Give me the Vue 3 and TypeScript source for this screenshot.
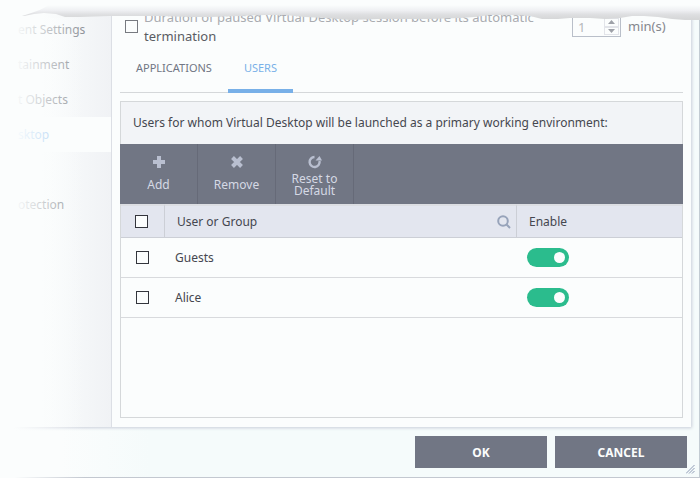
<script setup lang="ts">
import { computed, ref } from 'vue'

interface NavItem {
  label: string
  active?: boolean
}

interface UserRow {
  name: string
  selected: boolean
  enabled: boolean
}

const navItems: NavItem[] = [
  { label: 'ent Settings' },
  { label: 'tainment' },
  { label: 't Objects' },
  { label: 'sktop', active: true },
  { label: '' },
  { label: 'otection' },
]

const tabs = ['APPLICATIONS', 'USERS']
const activeTab = ref('USERS')
const limitDuration = ref(false)
const minutes = ref(1)

const rows = ref<UserRow[]>([
  { name: 'Guests', selected: false, enabled: true },
  { name: 'Alice', selected: false, enabled: true },
])

const allSelected = computed({
  get: () => rows.value.length > 0 && rows.value.every((r) => r.selected),
  set: (value: boolean) => rows.value.forEach((r) => (r.selected = value)),
})
</script>

<template>
  <div class="window">
    <div class="body">
      <nav class="sidebar">
        <a
          v-for="(item, i) in navItems"
          :key="i"
          href="#"
          class="nav-item"
          :class="{ active: item.active }"
        >{{ item.label }}</a>
      </nav>

      <main class="content">
        <div class="setting">
          <input id="limit" v-model="limitDuration" type="checkbox" class="check" />
          <label for="limit" class="setting-label">
            <span class="dim">Duration of paused Virtual Desktop session before its automatic</span>
            termination
          </label>
          <div class="spinner">
            <input id="minutes" v-model="minutes" type="text" class="spinner-input" />
            <div class="steps">
              <button type="button" aria-label="Increase" @click="minutes++">
                <svg width="7" height="4" viewBox="0 0 7 4"><path d="M0 4 3.5 0 7 4z" /></svg>
              </button>
              <button type="button" aria-label="Decrease" @click="minutes--">
                <svg width="7" height="4" viewBox="0 0 7 4"><path d="M0 0 3.5 4 7 0z" /></svg>
              </button>
            </div>
          </div>
          <label for="minutes" class="unit">min(s)</label>
        </div>

        <div class="tabs">
          <button
            v-for="tab in tabs"
            :key="tab"
            type="button"
            class="tab"
            :class="{ active: tab === activeTab }"
            @click="activeTab = tab"
          >{{ tab }}</button>
        </div>

        <section class="panel">
          <p class="intro">Users for whom Virtual Desktop will be launched as a primary working environment:</p>

          <div class="toolbar">
            <button type="button" class="tool">
              <svg width="14" height="14" viewBox="0 0 14 14">
                <path d="M5 1h4v4h4v4H9v4H5V9H1V5h4z" fill="currentColor" />
              </svg>
              <span>Add</span>
            </button>
            <button type="button" class="tool">
              <svg width="14" height="14" viewBox="0 0 14 14">
                <path d="M2.500 2.500 11.500 11.500M11.500 2.500 2.500 11.500" stroke="currentColor" stroke-width="4" fill="none" />
              </svg>
              <span>Remove</span>
            </button>
            <button type="button" class="tool two-line">
              <svg width="14" height="14" viewBox="0 0 14 14">
                <path d="M6.500 2A5 5 0 1 0 11.500 6" stroke="currentColor" stroke-width="2.400" fill="none" />
                <path d="M7.500 5.500 11.500 1 14 5.500z" fill="currentColor" />
              </svg>
              <span>Reset to Default</span>
            </button>
          </div>

          <table class="grid">
            <thead>
              <tr>
                <th class="col-check">
                  <input v-model="allSelected" type="checkbox" class="check" aria-label="Select all" />
                </th>
                <th class="col-name">
                  <div class="name-head">
                    <span>User or Group</span>
                    <button type="button" class="search" aria-label="Search">
                      <svg width="14" height="14" viewBox="0 0 14 14">
                        <circle cx="6" cy="6" r="4.800" />
                        <path d="M9.500 9.500 13 13" />
                      </svg>
                    </button>
                  </div>
                </th>
                <th class="col-enable">Enable</th>
              </tr>
            </thead>
            <tbody>
              <tr v-for="row in rows" :key="row.name">
                <td class="col-check">
                  <input v-model="row.selected" type="checkbox" class="check" :aria-label="row.name" />
                </td>
                <td class="col-name">{{ row.name }}</td>
                <td class="col-enable">
                  <input v-model="row.enabled" type="checkbox" class="toggle" :aria-label="`Enable ${row.name}`" />
                </td>
              </tr>
            </tbody>
          </table>
        </section>
      </main>
    </div>

    <footer class="footer">
      <button type="button" class="action">OK</button>
      <button type="button" class="action">CANCEL</button>
    </footer>

    <svg class="grip" width="9" height="9" viewBox="0 0 9 9">
      <path d="M0 8.500 8.500 0M3 8.500 8.500 3M6 8.500 8.500 6" />
    </svg>

    <svg class="torn" viewBox="0 0 700 24" preserveAspectRatio="none" aria-hidden="true">
      <defs>
        <linearGradient id="torn-shade" x1="0" y1="5" x2="0" y2="19" gradientUnits="userSpaceOnUse">
          <stop offset="0" stop-color="#fbfdfd" />
          <stop offset="0.400" stop-color="#eeeff2" />
          <stop offset="0.700" stop-color="#dddee0" />
          <stop offset="1" stop-color="#d6d7d8" />
        </linearGradient>
      </defs>
      <path d="M0 0H700V20L685 20 672 19 658 17 644 16 632 16 620 18 605 19 590 18 570 18 558 19 542 19 530 16 510 15 490 15 475 17 460 18 430 19 405 19 380 19 350 20 325 18 305 17 285 15 265 15 240 16 210 17 190 17 160 16 130 16 110 16 80 17 65 17 56 14 44 13 34 14 24 16 0 16z" fill="url(#torn-shade)" />
      <path d="M0 0H55C45 9 35 12 22 16L0 18z" fill="#fbfdfd" />
    </svg>
  </div>
</template>

<style>
body {
  margin: 0;
  background: #fbfdfd;
}
</style>

<style scoped>
.window {
  position: relative;
  box-sizing: border-box;
  min-height: 100vh;
  display: flex;
  flex-direction: column;
  font-family: "Noto Sans", "Open Sans", sans-serif;
  font-size: 12px;
  color: #45474f;
  background: linear-gradient(90deg, #fbfdfd 60px, #f5fbfb 150px);
  border-right: 1px solid #c3ccd3;
  border-bottom: 1px solid #c3c8d0;
}

/* Fades the left edge of the window out to the page colour. */
.window::after {
  content: "";
  position: absolute;
  top: 18px;
  bottom: -1px;
  left: 0;
  width: 85px;
  background: linear-gradient(90deg, #fbfdfd 14px, transparent);
  pointer-events: none;
}

button,
input {
  font: inherit;
  color: inherit;
  margin: 0;
  padding: 0;
  border: 0;
  border-radius: 0;
  background: none;
}

.body {
  flex: 1;
  display: flex;
  margin-right: 8px;
  background: #fbfdfd;
  box-shadow: 1px 1px 3px #c9ced9;
}

.sidebar {
  box-sizing: border-box;
  flex: 0 0 112px;
  padding-top: 12px;
  border-right: 1px solid #dcdfe5;
  background: linear-gradient(90deg, #fbfdfd 42px, #f0f2f5);
}

.nav-item {
  display: block;
  height: 35px;
  padding-left: 18px;
  line-height: 35px;
  color: #8d9096;
  text-decoration: none;
  white-space: nowrap;
}

.nav-item.active {
  background: #fbfdfd;
  color: #93c2f0;
}

.content {
  flex: 1;
  display: flex;
  flex-direction: column;
  padding: 8px 8px 9px;
}

.setting {
  display: flex;
  padding-left: 5px;
  font-size: 13px;
}

.check {
  appearance: none;
  display: block;
  flex: none;
  width: 13px;
  height: 13px;
  border: 1px solid #33353c;
  background: #fbfdfd;
}

.check:checked {
  box-shadow: inset 0 0 0 2px #fbfdfd;
  background: #717684;
}

.setting .check {
  margin-top: 12px;
  border-color: #777a80;
}

.setting-label {
  width: 428px;
  padding-left: 6px;
  line-height: 19px;
  color: #5a5c63;
}

.dim {
  display: block;
  color: #a9abb0;
  white-space: nowrap;
}

.spinner {
  box-sizing: border-box;
  display: flex;
  width: 49px;
  height: 21px;
  margin-top: 8px;
  padding: 1px;
  border: 1px solid #b9bfc9;
}

.spinner-input {
  flex: 1;
  min-width: 0;
  padding-left: 4px;
  color: #b5b7bb;
}

.steps {
  width: 15px;
  display: flex;
  flex-direction: column;
}

.steps button {
  flex: 1;
  display: flex;
  align-items: center;
  justify-content: center;
  border: 1px solid #e2e4e9;
  fill: #9ea1a8;
}

.unit {
  padding: 9px 0 0 7px;
  line-height: 19px;
  color: #85878d;
}

.tabs {
  display: flex;
  height: 46px;
  margin-bottom: 8px;
  border-bottom: 1px solid #d5d8da;
}

.tab {
  height: 47px;
  padding: 0 16px;
  border-bottom: 4px solid transparent;
  font-size: 11px;
  color: #717684;
}

.tab.active {
  color: #78b0e8;
  border-color: #78b0e8;
}

.panel {
  flex: 1;
  border: 1px solid #d5d8da;
}

.intro {
  margin: 0;
  padding-left: 12px;
  line-height: 42px;
  background: #f2f4f7;
  white-space: nowrap;
}

.toolbar {
  display: flex;
  margin: 0 -1px;
  background: #717684;
}

.tool {
  box-sizing: border-box;
  width: 78px;
  height: 60px;
  padding: 0 8px 1px;
  display: flex;
  flex-direction: column;
  align-items: center;
  justify-content: center;
  gap: 8px;
  border-right: 1px solid #666a78;
  line-height: 16px;
  color: #b9bfd0;
}

.tool span {
  color: #d5d9e4;
}

.tool.two-line {
  gap: 4px;
  padding: 4px 8px 0;
  line-height: 12px;
}

.grid {
  width: 100%;
  table-layout: fixed;
  border-collapse: separate;
  border-spacing: 0;
}

.grid th,
.grid td {
  box-sizing: border-box;
  height: 40px;
  padding: 0;
  font-weight: normal;
  text-align: left;
  border-bottom: 1px solid #d8dadd;
}

.grid th {
  height: 34px;
  background: #e3e6ef;
  border-top: 2px solid #dcdee3;
  border-bottom-color: #cccfd6;
}

.grid th:not(:last-child) {
  border-right: 1px solid #cccfd6;
}

.grid .col-check {
  width: 44px;
  padding-left: 14px;
}

.grid td.col-check {
  padding-left: 15px;
}

.grid .col-name {
  padding-left: 10px;
}

.grid th.col-name {
  padding-left: 12px;
}

.grid .col-enable {
  width: 165px;
  padding-left: 10px;
}

.grid th.col-enable {
  padding-left: 12px;
}

.name-head {
  display: flex;
  align-items: center;
  justify-content: space-between;
  padding-right: 5px;
}

.search {
  display: flex;
}

.search svg {
  fill: none;
  stroke: #97a3ba;
  stroke-width: 2;
}

.toggle {
  appearance: none;
  display: flex;
  align-items: center;
  box-sizing: border-box;
  width: 42px;
  height: 19px;
  padding: 0 4px;
  border-radius: 10px;
  background: #b9bfc9;
}

.toggle::before {
  content: "";
  width: 11px;
  height: 11px;
  border-radius: 50%;
  background: #fbfdfd;
}

.toggle:checked {
  justify-content: flex-end;
  background: #2bbc8d;
}

.footer {
  display: flex;
  justify-content: flex-end;
  gap: 8px;
  padding: 9px 12px;
}

.action {
  width: 132px;
  height: 32px;
  background: #717684;
  color: #fbfdfd;
  font-weight: bold;
}

.grip {
  position: absolute;
  right: 4px;
  bottom: 3px;
  stroke: #8d9ab4;
  fill: none;
}

.torn {
  position: absolute;
  top: 0;
  left: 0;
  width: calc(100% + 1px);
  height: 24px;
  pointer-events: none;
}
</style>
